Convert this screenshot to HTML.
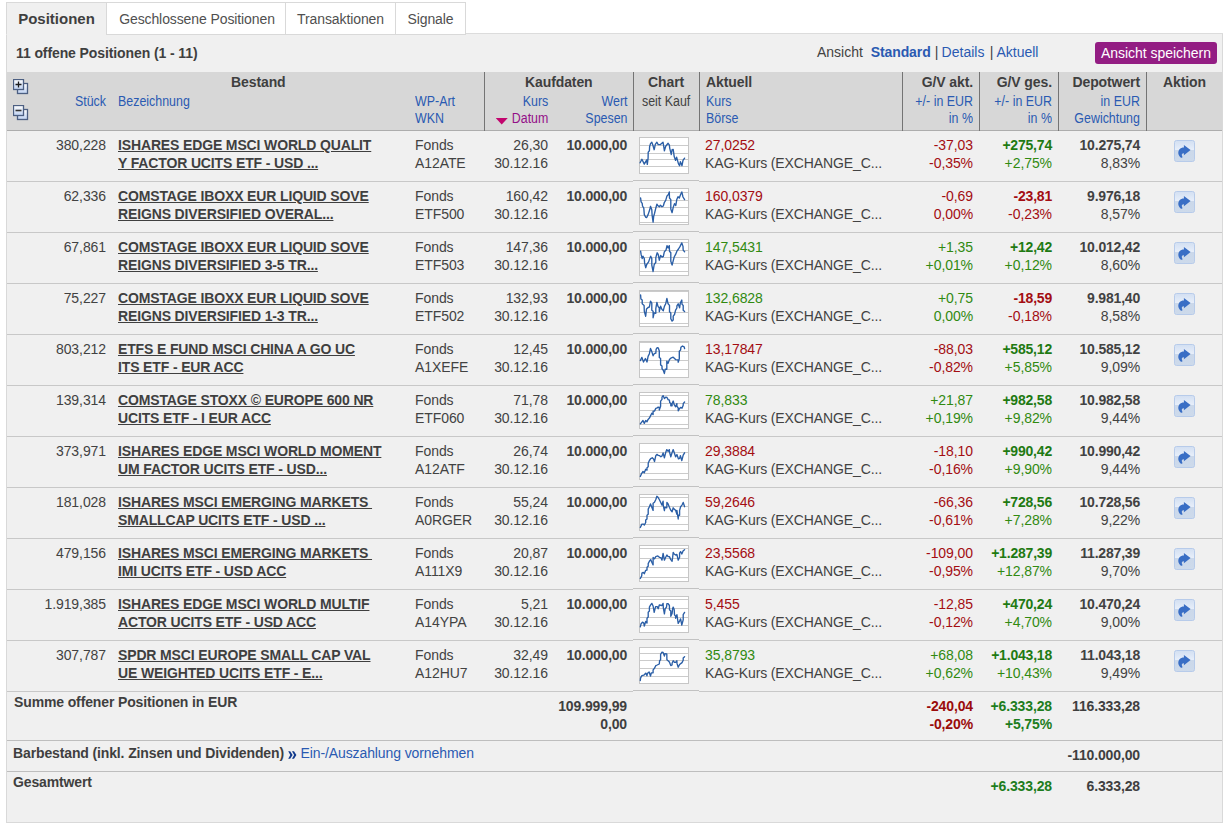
<!DOCTYPE html>
<html lang="de"><head><meta charset="utf-8"><title>Positionen</title>
<style>
html,body{margin:0;padding:0;background:#fff;}
body{width:1224px;height:824px;position:relative;overflow:hidden;font-family:"Liberation Sans",Arial,sans-serif;font-size:14px;color:#424242;line-height:18px;}
#box{position:absolute;left:6px;top:34px;width:1215px;height:788px;background:#f0f0f0;border:1px solid #d9d9d9;border-top:none;}
#topline{position:absolute;left:466px;top:33px;width:757px;height:1px;background:#dcdcdc;}
.tab{position:absolute;top:2px;height:31px;border:1px solid #d9d9d9;background:#fff;box-sizing:content-box;font-size:14px;line-height:33px;text-align:center;color:#505050;letter-spacing:-0.1px;}
.tab.on{background:#f0f0f0;border-bottom-color:#f0f0f0;font-weight:bold;font-size:15px;color:#3f3f3f;letter-spacing:0;line-height:31px;}
#cnt{position:absolute;left:16px;top:44px;font-weight:bold;font-size:14px;letter-spacing:-0.1px;color:#3f3f3f;}
#view{position:absolute;top:43px;left:817px;font-size:14px;white-space:nowrap;}
a,.l{color:#2a5ab2;text-decoration:none;}
#btn{position:absolute;left:1095px;top:42px;width:122px;height:22px;background:#931d83;border-radius:3px;color:#fff;font-size:14px;line-height:22px;text-align:center;letter-spacing:-0.03px;}
#hdr{position:absolute;left:7px;top:72px;width:1215px;height:58px;background:#d7d7d7;border-bottom:1px solid #adadad;}
.vs{position:absolute;top:72px;width:1px;height:59px;background:#747474;}
.h{position:absolute;white-space:nowrap;font-size:14px;line-height:17px;}
.h.b{font-weight:bold;color:#3f3f3f;letter-spacing:-0.1px;}
.h.l{font-size:14px;transform:scaleX(0.887);transform-origin:0 0;}
.h.l.ra{transform-origin:100% 0;}
.ra{text-align:right;}
.cr{color:#a30d12;}
.cg{color:#308a10;}
.cg b{color:#1f7a12;}
.row{position:absolute;left:0;width:1224px;height:50px;}
.row:after{content:"";position:absolute;left:7px;top:50px;width:1215px;height:1px;background:#c8c8c8;}
.c{position:absolute;top:5px;white-space:nowrap;line-height:18px;letter-spacing:-0.08px;}
.c.b,b{font-weight:bold;letter-spacing:-0.2px;}
.name{color:#3f3f3f;font-weight:bold;letter-spacing:-0.14px;text-decoration:underline;white-space:pre;}
.chart{position:absolute;left:639px;top:6px;}
.chartcell{position:absolute;left:633px;top:49px;width:66px;height:1px;background:#c2c2c2;border-bottom:1px solid #f0f0f0;z-index:2;}
.ico{position:absolute;left:1174px;top:9px;}
.d{color:#424242;letter-spacing:-0.12px;}
.sum{position:absolute;white-space:nowrap;font-weight:bold;line-height:18px;letter-spacing:-0.13px;color:#3f3f3f;}
.hl{position:absolute;left:7px;width:1215px;height:1px;background:#bebebe;}
</style></head><body>
<div id="box"></div>
<div id="topline"></div>
<div class="tab on" style="left:6px;width:99px;">Positionen</div>
<div class="tab" style="left:106px;width:178px;text-indent:2px">Geschlossene Positionen</div>
<div class="tab" style="left:285px;width:109px;">Transaktionen</div>
<div class="tab" style="left:395px;width:69px;">Signale</div>
<div id="cnt">11 offene Positionen (1 - 11)</div>
<div id="view">Ansicht &nbsp;<b class="l" style="letter-spacing:-0.1px">Standard</b><span style="margin-left:1.2px;word-spacing:-0.8px"> | </span><a>Details</a><span style="margin-left:2.2px;word-spacing:-0.8px"> | </span><a>Aktuell</a></div>
<div id="btn">Ansicht speichern</div>
<div id="hdr"></div>
<div class="vs" style="left:484px"></div><div class="vs" style="left:633px"></div><div class="vs" style="left:699px"></div>
<div class="vs" style="left:902px"></div><div class="vs" style="left:979px"></div><div class="vs" style="left:1058px"></div><div class="vs" style="left:1146px"></div>
<svg width="0" height="0" style="position:absolute"><defs><linearGradient id="ig" x1="0" y1="0" x2="0" y2="1"><stop offset="0" stop-color="#ffffff"/><stop offset="1" stop-color="#bfd2f2"/></linearGradient><linearGradient id="ag" x1="0" y1="0" x2="0" y2="1"><stop offset="0" stop-color="#d2dff2"/><stop offset="0.46" stop-color="#e8effa"/><stop offset="0.47" stop-color="#cbd8ea"/><stop offset="1" stop-color="#cddaeb"/></linearGradient></defs></svg>
<svg style="position:absolute;left:13px;top:79px" width="16" height="16" viewBox="0 0 16 16"><rect x="4.5" y="4.5" width="10" height="10" fill="url(#ig)" stroke="#4c5f82" stroke-width="1.3"/><rect x="0.5" y="0.5" width="10" height="10" fill="url(#ig)" stroke="#4c5f82" stroke-width="1.3"/><path d="M2.5 5.5h6M5.5 2.5v6" stroke="#1c1c1c" stroke-width="1.3"/></svg>
<svg style="position:absolute;left:13px;top:105px" width="16" height="16" viewBox="0 0 16 16"><rect x="4.5" y="4.5" width="10" height="10" fill="url(#ig)" stroke="#4c5f82" stroke-width="1.3"/><rect x="0.5" y="0.5" width="10" height="10" fill="url(#ig)" stroke="#4c5f82" stroke-width="1.3"/><path d="M2.5 5.5h6" stroke="#333" stroke-width="1.6"/></svg>
<div class="h b" style="left:231px;top:74px">Bestand</div>
<div class="h l ra" style="right:1118px;top:93px">Stück</div>
<div class="h l" style="left:118px;top:93px">Bezeichnung</div>
<div class="h l" style="left:415px;top:93px">WP-Art<br>WKN</div>
<div class="h b" style="left:525px;top:74px">Kaufdaten</div>
<div class="h l ra" style="right:676px;top:93px">Kurs<br><span style="color:#940f88"><svg width="13.6" height="7" viewBox="0 0 13.6 7" style="margin-right:4.5px;position:relative;top:2px"><path d="M0 0h13.6l-6.8 6.6z" fill="#c2056e"/></svg>Datum</span></div>
<div class="h l ra" style="right:597px;top:93px">Wert<br>Spesen</div>
<div class="h b" style="left:648px;top:74px">Chart</div>
<div class="h l" style="left:642px;top:93px;color:#424242">seit Kauf</div>
<div class="h b" style="left:706px;top:74px">Aktuell</div>
<div class="h l" style="left:706px;top:93px">Kurs<br>Börse</div>
<div class="h b ra" style="right:251px;top:74px">G/V akt.</div>
<div class="h l ra" style="right:251px;top:93px">+/- in EUR<br>in %</div>
<div class="h b ra" style="right:172px;top:74px">G/V ges.</div>
<div class="h l ra" style="right:172px;top:93px">+/- in EUR<br>in %</div>
<div class="h b ra" style="right:84px;top:74px">Depotwert</div>
<div class="h l ra" style="right:84px;top:93px">in EUR<br>Gewichtung</div>
<div class="h b" style="left:1163px;top:74px">Aktion</div>
<div class="row" style="top:131px">
<span class="c ra" style="right:1118px">380,228</span>
<a class="c name" style="left:118px">ISHARES EDGE MSCI WORLD QUALIT<br>Y FACTOR UCITS ETF - USD ...</a>
<span class="c" style="left:415px">Fonds<br>A12ATE</span>
<span class="c ra" style="right:676px">26,30<br>30.12.16</span>
<span class="c ra b" style="right:597px">10.000,00</span>
<span class="chartcell"></span>
<svg class="chart" width="50" height="37" viewBox="0 0 50 37"><rect x="0.5" y="0.5" width="49" height="36" fill="#fff" stroke="#c6c6c6"/><rect x="1" y="8" width="48" height="1" fill="#cbcbcb"/><rect x="1" y="16" width="48" height="1" fill="#cbcbcb"/><rect x="1" y="22" width="48" height="1" fill="#cbcbcb"/><rect x="1" y="29" width="48" height="1" fill="#cbcbcb"/><polyline points="1.1,25.8 2.9,22.3 5.3,27.1 7.7,22.9 8.3,27.4 9.1,21.2 9.2,15.1 10.4,13.8 10.6,9.8 11.5,6.6 12.8,5.2 13.9,8.2 15.2,12.7 16.3,7.4 17.9,5.2 19.2,7.6 21.4,7.6 24.0,5.2 24.6,8.7 25.4,13.8 26.7,9.2 29.1,6.3 30.4,8.2 30.7,11.1 32.3,17.5 33.1,12.7 34.2,12.4 35.2,19.6 36.6,23.4 37.6,20.2 39.5,26.9 40.6,28.7 41.4,24.7 43.0,28.7 44.0,23.4 45.6,21.1" fill="none" stroke="#2a5ea6" stroke-width="1.35" stroke-linejoin="round" stroke-linecap="round"/></svg>
<span class="c cr" style="left:705px">27,0252<br><span class="d">KAG-Kurs (EXCHANGE_C...</span></span>
<span class="c ra cr" style="right:251px">-37,03<br>-0,35%</span>
<span class="c ra cg" style="right:172px"><b>+275,74</b><br>+2,75%</span>
<span class="c ra" style="right:84px"><b>10.275,74</b><br>8,83%</span>
<svg class="ico" width="21" height="22" viewBox="0 0 21 22"><rect x="0.5" y="0.5" width="20" height="21" rx="2" fill="url(#ag)" stroke="#b7cbea"/><path d="M9.9 4.9 L16.6 10.1 L9.9 15.3 L9.9 13.2 C8.6 13.1 7.6 13.8 7.8 15.2 C7.9 16 8.4 16.6 8.5 17.1 C8.6 17.8 7.4 18 6.6 17.4 C4 15.4 3.6 11.5 5.5 9.3 C6.6 8 8 7.4 9.9 7.4 Z" fill="#396ec5"/></svg>
</div>
<div class="row" style="top:182px">
<span class="c ra" style="right:1118px">62,336</span>
<a class="c name" style="left:118px">COMSTAGE IBOXX EUR LIQUID SOVE<br>REIGNS DIVERSIFIED OVERAL...</a>
<span class="c" style="left:415px">Fonds<br>ETF500</span>
<span class="c ra" style="right:676px">160,42<br>30.12.16</span>
<span class="c ra b" style="right:597px">10.000,00</span>
<span class="chartcell"></span>
<svg class="chart" width="50" height="37" viewBox="0 0 50 37"><rect x="0.5" y="0.5" width="49" height="36" fill="#fff" stroke="#c6c6c6"/><rect x="1" y="4" width="48" height="1" fill="#cbcbcb"/><rect x="1" y="12" width="48" height="1" fill="#cbcbcb"/><rect x="1" y="19" width="48" height="1" fill="#cbcbcb"/><rect x="1" y="27" width="48" height="1" fill="#cbcbcb"/><rect x="1" y="34" width="48" height="1" fill="#cbcbcb"/><polyline points="1.6,10.0 2.1,13.8 3.2,15.4 3.5,18.0 4.8,20.2 5.3,26.6 6.7,29.3 7.7,29.5 9.1,26.6 10.7,21.8 11.5,18.3 12.8,21.8 13.1,27.1 14.1,34.1 14.7,28.2 15.5,25.5 16.8,20.2 17.9,16.2 19.0,17.8 20.3,18.8 21.4,17.2 23.0,18.8 24.3,18.0 25.4,14.3 26.7,12.4 28.0,7.9 29.4,6.6 30.3,3.9 30.5,10.0 31.8,11.6 31.8,21.0 33.1,24.7 34.2,19.4 35.5,15.6 36.8,17.5 37.8,11.4 39.0,8.7 40.3,10.0 41.6,6.6 42.8,3.9 44.0,9.0 45.6,11.6" fill="none" stroke="#2a5ea6" stroke-width="1.35" stroke-linejoin="round" stroke-linecap="round"/></svg>
<span class="c cr" style="left:705px">160,0379<br><span class="d">KAG-Kurs (EXCHANGE_C...</span></span>
<span class="c ra cr" style="right:251px">-0,69<br>0,00%</span>
<span class="c ra cr" style="right:172px"><b>-23,81</b><br>-0,23%</span>
<span class="c ra" style="right:84px"><b>9.976,18</b><br>8,57%</span>
<svg class="ico" width="21" height="22" viewBox="0 0 21 22"><rect x="0.5" y="0.5" width="20" height="21" rx="2" fill="url(#ag)" stroke="#b7cbea"/><path d="M9.9 4.9 L16.6 10.1 L9.9 15.3 L9.9 13.2 C8.6 13.1 7.6 13.8 7.8 15.2 C7.9 16 8.4 16.6 8.5 17.1 C8.6 17.8 7.4 18 6.6 17.4 C4 15.4 3.6 11.5 5.5 9.3 C6.6 8 8 7.4 9.9 7.4 Z" fill="#396ec5"/></svg>
</div>
<div class="row" style="top:233px">
<span class="c ra" style="right:1118px">67,861</span>
<a class="c name" style="left:118px">COMSTAGE IBOXX EUR LIQUID SOVE<br>REIGNS DIVERSIFIED 3-5 TR...</a>
<span class="c" style="left:415px">Fonds<br>ETF503</span>
<span class="c ra" style="right:676px">147,36<br>30.12.16</span>
<span class="c ra b" style="right:597px">10.000,00</span>
<span class="chartcell"></span>
<svg class="chart" width="50" height="37" viewBox="0 0 50 37"><rect x="0.5" y="0.5" width="49" height="36" fill="#fff" stroke="#c6c6c6"/><rect x="1" y="3" width="48" height="1" fill="#cbcbcb"/><rect x="1" y="11" width="48" height="1" fill="#cbcbcb"/><rect x="1" y="18" width="48" height="1" fill="#cbcbcb"/><rect x="1" y="24" width="48" height="1" fill="#cbcbcb"/><rect x="1" y="32" width="48" height="1" fill="#cbcbcb"/><polyline points="1.6,12.2 2.1,15.4 3.2,19.6 4.0,17.2 5.3,19.6 5.6,23.9 6.7,28.7 7.7,25.5 9.6,22.9 10.9,19.1 11.7,17.2 12.8,19.6 12.8,26.1 14.1,32.5 15.2,25.5 16.8,23.4 16.8,18.6 18.2,13.8 19.2,15.4 20.3,21.2 21.6,16.4 23.0,18.0 24.3,17.5 25.4,12.7 27.0,11.1 28.0,6.6 29.1,9.0 30.3,6.6 30.5,12.2 31.8,13.8 31.8,22.3 33.1,26.1 34.2,21.8 35.2,18.0 36.6,15.4 37.9,12.2 39.5,10.0 41.1,7.4 42.8,3.9 44.0,7.4 44.2,11.1 45.6,12.7" fill="none" stroke="#2a5ea6" stroke-width="1.35" stroke-linejoin="round" stroke-linecap="round"/></svg>
<span class="c cg" style="left:705px">147,5431<br><span class="d">KAG-Kurs (EXCHANGE_C...</span></span>
<span class="c ra cg" style="right:251px">+1,35<br>+0,01%</span>
<span class="c ra cg" style="right:172px"><b>+12,42</b><br>+0,12%</span>
<span class="c ra" style="right:84px"><b>10.012,42</b><br>8,60%</span>
<svg class="ico" width="21" height="22" viewBox="0 0 21 22"><rect x="0.5" y="0.5" width="20" height="21" rx="2" fill="url(#ag)" stroke="#b7cbea"/><path d="M9.9 4.9 L16.6 10.1 L9.9 15.3 L9.9 13.2 C8.6 13.1 7.6 13.8 7.8 15.2 C7.9 16 8.4 16.6 8.5 17.1 C8.6 17.8 7.4 18 6.6 17.4 C4 15.4 3.6 11.5 5.5 9.3 C6.6 8 8 7.4 9.9 7.4 Z" fill="#396ec5"/></svg>
</div>
<div class="row" style="top:284px">
<span class="c ra" style="right:1118px">75,227</span>
<a class="c name" style="left:118px">COMSTAGE IBOXX EUR LIQUID SOVE<br>REIGNS DIVERSIFIED 1-3 TR...</a>
<span class="c" style="left:415px">Fonds<br>ETF502</span>
<span class="c ra" style="right:676px">132,93<br>30.12.16</span>
<span class="c ra b" style="right:597px">10.000,00</span>
<span class="chartcell"></span>
<svg class="chart" width="50" height="37" viewBox="0 0 50 37"><rect x="0.5" y="0.5" width="49" height="36" fill="#fff" stroke="#c6c6c6"/><rect x="1" y="1" width="48" height="1" fill="#cbcbcb"/><rect x="1" y="12" width="48" height="1" fill="#cbcbcb"/><rect x="1" y="22" width="48" height="1" fill="#cbcbcb"/><rect x="1" y="33" width="48" height="1" fill="#cbcbcb"/><polyline points="1.6,5.0 1.9,9.0 3.2,10.0 3.2,13.8 5.1,15.4 5.3,21.2 6.7,26.3 7.5,19.1 9.1,17.5 10.4,17.0 11.5,11.1 12.8,13.2 12.8,20.2 14.1,21.2 14.1,27.7 15.2,22.9 16.8,23.4 16.8,18.6 17.9,12.4 19.0,16.4 20.3,18.0 20.3,21.5 21.6,16.2 23.0,19.6 24.3,20.7 25.4,16.4 26.7,13.8 27.9,8.4 29.1,13.8 30.5,15.4 30.5,21.8 31.8,22.9 31.8,28.7 33.1,31.1 34.2,30.1 34.2,26.1 35.5,24.5 36.6,20.2 37.9,18.0 37.9,15.9 39.2,13.8 40.6,17.8 41.4,12.7 42.8,10.0 43.0,14.3 44.2,15.4 44.2,20.2 45.6,21.5" fill="none" stroke="#2a5ea6" stroke-width="1.35" stroke-linejoin="round" stroke-linecap="round"/></svg>
<span class="c cg" style="left:705px">132,6828<br><span class="d">KAG-Kurs (EXCHANGE_C...</span></span>
<span class="c ra cg" style="right:251px">+0,75<br>0,00%</span>
<span class="c ra cr" style="right:172px"><b>-18,59</b><br>-0,18%</span>
<span class="c ra" style="right:84px"><b>9.981,40</b><br>8,58%</span>
<svg class="ico" width="21" height="22" viewBox="0 0 21 22"><rect x="0.5" y="0.5" width="20" height="21" rx="2" fill="url(#ag)" stroke="#b7cbea"/><path d="M9.9 4.9 L16.6 10.1 L9.9 15.3 L9.9 13.2 C8.6 13.1 7.6 13.8 7.8 15.2 C7.9 16 8.4 16.6 8.5 17.1 C8.6 17.8 7.4 18 6.6 17.4 C4 15.4 3.6 11.5 5.5 9.3 C6.6 8 8 7.4 9.9 7.4 Z" fill="#396ec5"/></svg>
</div>
<div class="row" style="top:335px">
<span class="c ra" style="right:1118px">803,212</span>
<a class="c name" style="left:118px">ETFS E FUND MSCI CHINA A GO UC<br>ITS ETF - EUR ACC</a>
<span class="c" style="left:415px">Fonds<br>A1XEFE</span>
<span class="c ra" style="right:676px">12,45<br>30.12.16</span>
<span class="c ra b" style="right:597px">10.000,00</span>
<span class="chartcell"></span>
<svg class="chart" width="50" height="37" viewBox="0 0 50 37"><rect x="0.5" y="0.5" width="49" height="36" fill="#fff" stroke="#c6c6c6"/><rect x="1" y="1" width="48" height="1" fill="#cbcbcb"/><rect x="1" y="10" width="48" height="1" fill="#cbcbcb"/><rect x="1" y="19" width="48" height="1" fill="#cbcbcb"/><rect x="1" y="28" width="48" height="1" fill="#cbcbcb"/><polyline points="1.3,19.6 2.9,16.4 4.5,21.0 6.4,17.5 8.0,21.0 9.1,15.4 10.4,12.7 11.5,7.4 12.8,10.6 14.1,14.8 15.2,12.7 16.8,12.2 17.1,8.4 18.2,6.6 19.2,6.8 20.3,10.0 20.3,16.4 21.6,17.5 21.6,23.9 23.0,25.0 23.0,27.7 24.3,29.3 25.4,32.5 26.2,28.2 27.8,28.2 27.8,20.2 29.1,22.3 30.4,18.6 31.8,17.2 34.2,16.2 36.6,18.6 39.0,18.8 39.2,21.2 40.3,17.8 40.3,10.3 41.6,9.0 41.9,6.3 43.5,5.0 45.1,5.8 45.6,7.6" fill="none" stroke="#2a5ea6" stroke-width="1.35" stroke-linejoin="round" stroke-linecap="round"/></svg>
<span class="c cr" style="left:705px">13,17847<br><span class="d">KAG-Kurs (EXCHANGE_C...</span></span>
<span class="c ra cr" style="right:251px">-88,03<br>-0,82%</span>
<span class="c ra cg" style="right:172px"><b>+585,12</b><br>+5,85%</span>
<span class="c ra" style="right:84px"><b>10.585,12</b><br>9,09%</span>
<svg class="ico" width="21" height="22" viewBox="0 0 21 22"><rect x="0.5" y="0.5" width="20" height="21" rx="2" fill="url(#ag)" stroke="#b7cbea"/><path d="M9.9 4.9 L16.6 10.1 L9.9 15.3 L9.9 13.2 C8.6 13.1 7.6 13.8 7.8 15.2 C7.9 16 8.4 16.6 8.5 17.1 C8.6 17.8 7.4 18 6.6 17.4 C4 15.4 3.6 11.5 5.5 9.3 C6.6 8 8 7.4 9.9 7.4 Z" fill="#396ec5"/></svg>
</div>
<div class="row" style="top:386px">
<span class="c ra" style="right:1118px">139,314</span>
<a class="c name" style="left:118px">COMSTAGE STOXX © EUROPE 600 NR<br>UCITS ETF - I EUR ACC</a>
<span class="c" style="left:415px">Fonds<br>ETF060</span>
<span class="c ra" style="right:676px">71,78<br>30.12.16</span>
<span class="c ra b" style="right:597px">10.000,00</span>
<span class="chartcell"></span>
<svg class="chart" width="50" height="37" viewBox="0 0 50 37"><rect x="0.5" y="0.5" width="49" height="36" fill="#fff" stroke="#c6c6c6"/><rect x="1" y="3" width="48" height="1" fill="#cbcbcb"/><rect x="1" y="11" width="48" height="1" fill="#cbcbcb"/><rect x="1" y="18" width="48" height="1" fill="#cbcbcb"/><rect x="1" y="24" width="48" height="1" fill="#cbcbcb"/><rect x="1" y="32" width="48" height="1" fill="#cbcbcb"/><polyline points="1.3,31.9 4.0,28.5 5.3,31.4 6.7,28.5 8.0,29.8 9.1,27.4 10.4,26.1 11.5,23.9 12.8,21.2 14.1,22.6 14.1,19.1 15.5,19.1 16.8,16.4 18.2,15.9 19.2,15.1 20.3,15.4 20.3,18.0 21.6,14.3 21.6,9.2 23.0,7.4 23.0,5.2 24.1,3.6 25.4,6.6 26.7,5.2 28.0,5.5 29.1,7.6 30.4,8.2 30.7,10.6 31.8,11.6 31.8,13.8 33.1,13.8 33.1,11.6 34.2,9.0 35.2,12.7 36.6,14.8 37.9,11.6 37.9,14.3 39.2,15.9 39.2,18.8 40.6,16.4 41.6,15.4 43.0,16.2 44.2,13.2 44.2,11.6 45.6,10.0" fill="none" stroke="#2a5ea6" stroke-width="1.35" stroke-linejoin="round" stroke-linecap="round"/></svg>
<span class="c cg" style="left:705px">78,833<br><span class="d">KAG-Kurs (EXCHANGE_C...</span></span>
<span class="c ra cg" style="right:251px">+21,87<br>+0,19%</span>
<span class="c ra cg" style="right:172px"><b>+982,58</b><br>+9,82%</span>
<span class="c ra" style="right:84px"><b>10.982,58</b><br>9,44%</span>
<svg class="ico" width="21" height="22" viewBox="0 0 21 22"><rect x="0.5" y="0.5" width="20" height="21" rx="2" fill="url(#ag)" stroke="#b7cbea"/><path d="M9.9 4.9 L16.6 10.1 L9.9 15.3 L9.9 13.2 C8.6 13.1 7.6 13.8 7.8 15.2 C7.9 16 8.4 16.6 8.5 17.1 C8.6 17.8 7.4 18 6.6 17.4 C4 15.4 3.6 11.5 5.5 9.3 C6.6 8 8 7.4 9.9 7.4 Z" fill="#396ec5"/></svg>
</div>
<div class="row" style="top:437px">
<span class="c ra" style="right:1118px">373,971</span>
<a class="c name" style="left:118px">ISHARES EDGE MSCI WORLD MOMENT<br>UM FACTOR UCITS ETF - USD...</a>
<span class="c" style="left:415px">Fonds<br>A12ATF</span>
<span class="c ra" style="right:676px">26,74<br>30.12.16</span>
<span class="c ra b" style="right:597px">10.000,00</span>
<span class="chartcell"></span>
<svg class="chart" width="50" height="37" viewBox="0 0 50 37"><rect x="0.5" y="0.5" width="49" height="36" fill="#fff" stroke="#c6c6c6"/><rect x="1" y="9" width="48" height="1" fill="#cbcbcb"/><rect x="1" y="19" width="48" height="1" fill="#cbcbcb"/><rect x="1" y="30" width="48" height="1" fill="#cbcbcb"/><polyline points="1.3,33.5 2.7,30.3 4.0,28.5 5.3,29.8 6.7,26.3 8.0,27.1 8.0,24.7 9.2,23.7 9.2,20.2 10.4,17.5 11.7,15.6 13.3,14.8 14.7,16.2 15.5,18.6 16.8,12.7 17.9,11.4 19.2,12.4 20.6,12.7 21.9,13.8 23.0,13.0 24.1,10.0 25.4,14.8 26.7,9.5 27.8,6.6 29.1,8.2 30.3,6.6 30.5,9.0 31.8,13.8 33.1,9.5 34.2,6.6 35.2,9.5 36.6,13.8 37.9,11.6 39.5,15.9 40.6,15.4 41.4,12.7 42.8,17.5 44.2,12.2 45.6,9.8" fill="none" stroke="#2a5ea6" stroke-width="1.35" stroke-linejoin="round" stroke-linecap="round"/></svg>
<span class="c cr" style="left:705px">29,3884<br><span class="d">KAG-Kurs (EXCHANGE_C...</span></span>
<span class="c ra cr" style="right:251px">-18,10<br>-0,16%</span>
<span class="c ra cg" style="right:172px"><b>+990,42</b><br>+9,90%</span>
<span class="c ra" style="right:84px"><b>10.990,42</b><br>9,44%</span>
<svg class="ico" width="21" height="22" viewBox="0 0 21 22"><rect x="0.5" y="0.5" width="20" height="21" rx="2" fill="url(#ag)" stroke="#b7cbea"/><path d="M9.9 4.9 L16.6 10.1 L9.9 15.3 L9.9 13.2 C8.6 13.1 7.6 13.8 7.8 15.2 C7.9 16 8.4 16.6 8.5 17.1 C8.6 17.8 7.4 18 6.6 17.4 C4 15.4 3.6 11.5 5.5 9.3 C6.6 8 8 7.4 9.9 7.4 Z" fill="#396ec5"/></svg>
</div>
<div class="row" style="top:488px">
<span class="c ra" style="right:1118px">181,028</span>
<a class="c name" style="left:118px">ISHARES MSCI EMERGING MARKETS <br>SMALLCAP UCITS ETF - USD ...</a>
<span class="c" style="left:415px">Fonds<br>A0RGER</span>
<span class="c ra" style="right:676px">55,24<br>30.12.16</span>
<span class="c ra b" style="right:597px">10.000,00</span>
<span class="chartcell"></span>
<svg class="chart" width="50" height="37" viewBox="0 0 50 37"><rect x="0.5" y="0.5" width="49" height="36" fill="#fff" stroke="#c6c6c6"/><rect x="1" y="3" width="48" height="1" fill="#cbcbcb"/><rect x="1" y="12" width="48" height="1" fill="#cbcbcb"/><rect x="1" y="22" width="48" height="1" fill="#cbcbcb"/><rect x="1" y="30" width="48" height="1" fill="#cbcbcb"/><polyline points="1.3,33.5 2.9,30.1 4.3,30.1 5.3,31.1 6.7,28.5 6.7,26.1 8.0,25.0 8.0,21.2 9.2,20.2 9.2,15.1 10.4,12.7 11.5,10.0 12.8,13.2 14.1,16.4 14.1,9.2 15.5,8.2 16.8,5.5 17.9,2.3 19.2,3.6 20.3,5.5 21.6,8.2 23.0,11.1 24.1,7.1 24.3,11.6 25.4,16.7 25.9,13.2 27.8,13.8 27.9,8.4 29.1,10.0 30.4,13.2 31.8,16.2 33.1,17.8 34.2,13.8 35.2,15.1 36.6,16.2 37.9,20.2 37.9,16.4 39.2,25.0 39.5,21.2 40.6,21.2 40.6,16.4 41.6,12.7 43.0,11.1 44.2,8.4 45.6,12.7" fill="none" stroke="#2a5ea6" stroke-width="1.35" stroke-linejoin="round" stroke-linecap="round"/></svg>
<span class="c cr" style="left:705px">59,2646<br><span class="d">KAG-Kurs (EXCHANGE_C...</span></span>
<span class="c ra cr" style="right:251px">-66,36<br>-0,61%</span>
<span class="c ra cg" style="right:172px"><b>+728,56</b><br>+7,28%</span>
<span class="c ra" style="right:84px"><b>10.728,56</b><br>9,22%</span>
<svg class="ico" width="21" height="22" viewBox="0 0 21 22"><rect x="0.5" y="0.5" width="20" height="21" rx="2" fill="url(#ag)" stroke="#b7cbea"/><path d="M9.9 4.9 L16.6 10.1 L9.9 15.3 L9.9 13.2 C8.6 13.1 7.6 13.8 7.8 15.2 C7.9 16 8.4 16.6 8.5 17.1 C8.6 17.8 7.4 18 6.6 17.4 C4 15.4 3.6 11.5 5.5 9.3 C6.6 8 8 7.4 9.9 7.4 Z" fill="#396ec5"/></svg>
</div>
<div class="row" style="top:539px">
<span class="c ra" style="right:1118px">479,156</span>
<a class="c name" style="left:118px">ISHARES MSCI EMERGING MARKETS <br>IMI UCITS ETF - USD ACC</a>
<span class="c" style="left:415px">Fonds<br>A111X9</span>
<span class="c ra" style="right:676px">20,87<br>30.12.16</span>
<span class="c ra b" style="right:597px">10.000,00</span>
<span class="chartcell"></span>
<svg class="chart" width="50" height="37" viewBox="0 0 50 37"><rect x="0.5" y="0.5" width="49" height="36" fill="#fff" stroke="#c6c6c6"/><rect x="1" y="3" width="48" height="1" fill="#cbcbcb"/><rect x="1" y="13" width="48" height="1" fill="#cbcbcb"/><rect x="1" y="22" width="48" height="1" fill="#cbcbcb"/><rect x="1" y="32" width="48" height="1" fill="#cbcbcb"/><polyline points="1.3,33.5 2.7,30.9 2.9,28.2 4.3,27.4 5.3,28.7 6.7,25.3 8.0,25.0 8.0,22.3 9.2,21.2 9.2,18.6 10.4,16.2 11.7,14.6 12.8,17.2 14.1,19.9 14.1,12.4 15.5,13.8 16.8,11.6 18.2,11.0 19.5,11.4 20.6,12.4 21.9,12.7 23.0,15.1 24.1,8.4 25.4,15.1 26.7,12.2 27.9,10.0 29.1,11.6 30.4,11.6 31.8,14.6 33.1,16.2 33.6,12.7 34.2,7.4 35.2,9.0 36.6,10.0 37.9,9.5 39.2,15.1 40.6,12.2 40.6,8.2 41.6,6.6 42.8,9.0 44.2,5.8 45.6,4.7" fill="none" stroke="#2a5ea6" stroke-width="1.35" stroke-linejoin="round" stroke-linecap="round"/></svg>
<span class="c cr" style="left:705px">23,5568<br><span class="d">KAG-Kurs (EXCHANGE_C...</span></span>
<span class="c ra cr" style="right:251px">-109,00<br>-0,95%</span>
<span class="c ra cg" style="right:172px"><b>+1.287,39</b><br>+12,87%</span>
<span class="c ra" style="right:84px"><b>11.287,39</b><br>9,70%</span>
<svg class="ico" width="21" height="22" viewBox="0 0 21 22"><rect x="0.5" y="0.5" width="20" height="21" rx="2" fill="url(#ag)" stroke="#b7cbea"/><path d="M9.9 4.9 L16.6 10.1 L9.9 15.3 L9.9 13.2 C8.6 13.1 7.6 13.8 7.8 15.2 C7.9 16 8.4 16.6 8.5 17.1 C8.6 17.8 7.4 18 6.6 17.4 C4 15.4 3.6 11.5 5.5 9.3 C6.6 8 8 7.4 9.9 7.4 Z" fill="#396ec5"/></svg>
</div>
<div class="row" style="top:590px">
<span class="c ra" style="right:1118px">1.919,385</span>
<a class="c name" style="left:118px">ISHARES EDGE MSCI WORLD MULTIF<br>ACTOR UCITS ETF - USD ACC</a>
<span class="c" style="left:415px">Fonds<br>A14YPA</span>
<span class="c ra" style="right:676px">5,21<br>30.12.16</span>
<span class="c ra b" style="right:597px">10.000,00</span>
<span class="chartcell"></span>
<svg class="chart" width="50" height="37" viewBox="0 0 50 37"><rect x="0.5" y="0.5" width="49" height="36" fill="#fff" stroke="#c6c6c6"/><rect x="1" y="3" width="48" height="1" fill="#cbcbcb"/><rect x="1" y="12" width="48" height="1" fill="#cbcbcb"/><rect x="1" y="21" width="48" height="1" fill="#cbcbcb"/><rect x="1" y="29" width="48" height="1" fill="#cbcbcb"/><polyline points="1.3,30.9 2.1,27.7 3.5,26.1 4.8,27.1 5.3,30.1 6.7,25.5 8.0,27.1 8.0,22.3 9.2,21.0 9.2,16.2 10.4,15.1 10.4,11.1 11.5,9.2 12.8,7.4 14.1,10.0 15.2,16.4 16.6,10.6 18.2,10.6 19.2,12.7 20.3,9.0 23.0,9.5 24.1,7.4 24.3,11.6 25.4,17.8 26.2,12.7 27.5,11.1 27.9,7.6 29.1,7.6 30.4,9.5 30.5,13.8 31.8,15.1 31.8,20.2 33.1,17.5 33.6,12.7 34.2,11.1 35.2,13.8 35.5,18.8 36.6,20.2 36.6,22.3 37.9,18.6 39.2,27.4 40.6,25.0 41.6,22.9 42.8,29.0 44.2,23.9 44.2,18.6 45.6,16.4" fill="none" stroke="#2a5ea6" stroke-width="1.35" stroke-linejoin="round" stroke-linecap="round"/></svg>
<span class="c cr" style="left:705px">5,455<br><span class="d">KAG-Kurs (EXCHANGE_C...</span></span>
<span class="c ra cr" style="right:251px">-12,85<br>-0,12%</span>
<span class="c ra cg" style="right:172px"><b>+470,24</b><br>+4,70%</span>
<span class="c ra" style="right:84px"><b>10.470,24</b><br>9,00%</span>
<svg class="ico" width="21" height="22" viewBox="0 0 21 22"><rect x="0.5" y="0.5" width="20" height="21" rx="2" fill="url(#ag)" stroke="#b7cbea"/><path d="M9.9 4.9 L16.6 10.1 L9.9 15.3 L9.9 13.2 C8.6 13.1 7.6 13.8 7.8 15.2 C7.9 16 8.4 16.6 8.5 17.1 C8.6 17.8 7.4 18 6.6 17.4 C4 15.4 3.6 11.5 5.5 9.3 C6.6 8 8 7.4 9.9 7.4 Z" fill="#396ec5"/></svg>
</div>
<div class="row" style="top:641px">
<span class="c ra" style="right:1118px">307,787</span>
<a class="c name" style="left:118px">SPDR MSCI EUROPE SMALL CAP VAL<br>UE WEIGHTED UCITS ETF - E...</a>
<span class="c" style="left:415px">Fonds<br>A12HU7</span>
<span class="c ra" style="right:676px">32,49<br>30.12.16</span>
<span class="c ra b" style="right:597px">10.000,00</span>
<span class="chartcell"></span>
<svg class="chart" width="50" height="37" viewBox="0 0 50 37"><rect x="0.5" y="0.5" width="49" height="36" fill="#fff" stroke="#c6c6c6"/><rect x="1" y="6" width="48" height="1" fill="#cbcbcb"/><rect x="1" y="13" width="48" height="1" fill="#cbcbcb"/><rect x="1" y="21" width="48" height="1" fill="#cbcbcb"/><rect x="1" y="29" width="48" height="1" fill="#cbcbcb"/><polyline points="1.3,33.5 1.6,30.9 2.9,28.7 4.8,28.2 6.7,26.1 8.0,28.7 8.3,26.6 10.1,25.0 11.5,29.0 12.3,25.8 14.1,25.8 14.1,22.9 15.5,21.2 16.8,18.6 18.2,18.0 20.3,17.0 20.6,13.8 21.6,12.7 21.6,7.4 23.0,5.2 24.1,5.5 25.4,9.0 25.9,6.6 27.8,6.8 27.9,12.7 29.1,13.8 30.4,15.1 31.8,18.6 33.1,18.0 33.1,16.2 34.2,13.8 35.5,15.4 36.6,15.4 37.9,13.8 38.0,16.4 39.2,20.2 40.6,17.5 43.0,15.6 44.2,13.2 44.2,11.1 45.6,9.8" fill="none" stroke="#2a5ea6" stroke-width="1.35" stroke-linejoin="round" stroke-linecap="round"/></svg>
<span class="c cg" style="left:705px">35,8793<br><span class="d">KAG-Kurs (EXCHANGE_C...</span></span>
<span class="c ra cg" style="right:251px">+68,08<br>+0,62%</span>
<span class="c ra cg" style="right:172px"><b>+1.043,18</b><br>+10,43%</span>
<span class="c ra" style="right:84px"><b>11.043,18</b><br>9,49%</span>
<svg class="ico" width="21" height="22" viewBox="0 0 21 22"><rect x="0.5" y="0.5" width="20" height="21" rx="2" fill="url(#ag)" stroke="#b7cbea"/><path d="M9.9 4.9 L16.6 10.1 L9.9 15.3 L9.9 13.2 C8.6 13.1 7.6 13.8 7.8 15.2 C7.9 16 8.4 16.6 8.5 17.1 C8.6 17.8 7.4 18 6.6 17.4 C4 15.4 3.6 11.5 5.5 9.3 C6.6 8 8 7.4 9.9 7.4 Z" fill="#396ec5"/></svg>
</div>
<div class="sum" style="left:14px;top:693px">Summe offener Positionen in EUR</div>
<div class="sum" style="right:597px;top:697px;text-align:right">109.999,99<br>0,00</div>
<div class="sum" style="right:251px;top:697px;text-align:right;color:#9a0b0b">-240,04<br>-0,20%</div>
<div class="sum" style="right:172px;top:697px;text-align:right;color:#1d7d1d">+6.333,28<br>+5,75%</div>
<div class="sum" style="right:84px;top:697px;text-align:right">116.333,28</div>
<div class="hl" style="top:740px"></div>
<div class="sum" style="left:13px;top:744px">Barbestand (inkl. Zinsen und Dividenden) <svg width="9" height="8" viewBox="0 0 9 8" style="margin:0 -0.2px 0 0.2px;position:relative;top:1px"><path d="M0.2 0.3h2L4.6 4 2.2 7.7H0.2L2.3 4z M4 0.3h2L8.4 4 6 7.7H4L6.1 4z" fill="#113a8c"/></svg> <a style="font-weight:normal;letter-spacing:-0.1px">Ein-/Auszahlung vornehmen</a></div>
<div class="sum" style="right:84px;top:746px;text-align:right">-110.000,00</div>
<div class="hl" style="top:771px"></div>
<div class="sum" style="left:13px;top:773px">Gesamtwert</div>
<div class="sum" style="right:172px;top:777px;text-align:right;color:#1d7d1d">+6.333,28</div>
<div class="sum" style="right:84px;top:777px;text-align:right">6.333,28</div>
</body></html>
